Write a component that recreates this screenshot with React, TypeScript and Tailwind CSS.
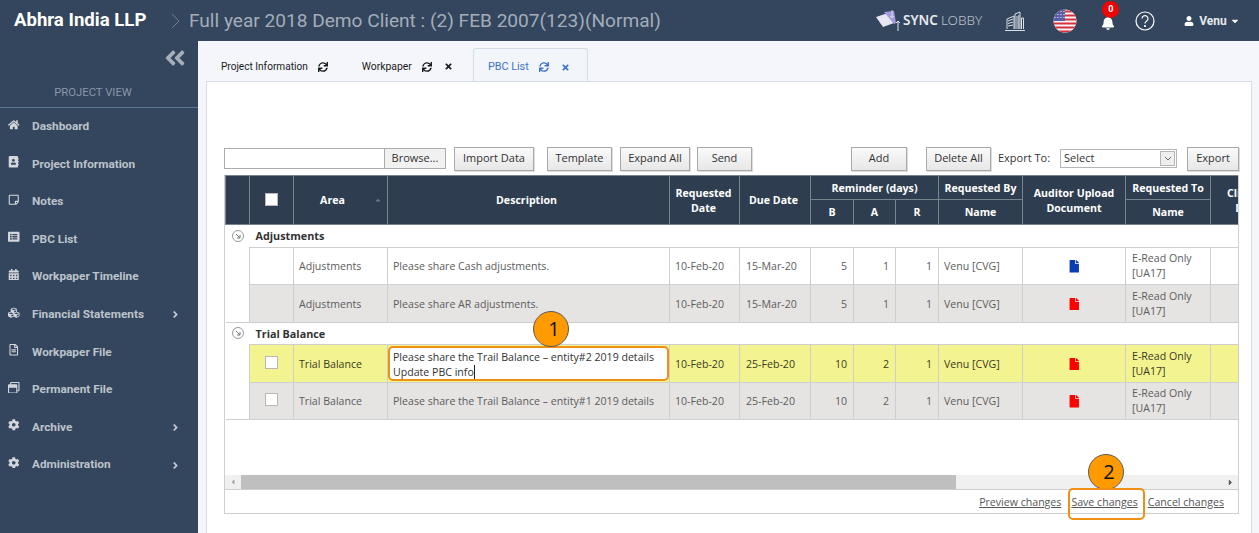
import React from "react";
import {
  FaHome, FaAddressBook, FaRegStickyNote, FaListAlt, FaCalendarAlt, FaCubes, FaRegFileAlt, FaRegWindowRestore,
  FaCog, FaAngleRight, FaAngleDoubleLeft, FaSync, FaTimes, FaFile, FaUser, FaBell, FaCaretDown, FaCaretLeft, FaCaretRight, FaCaretUp,
} from "react-icons/fa";

const nav: [any, string, boolean][] = [
  [FaHome, "Dashboard", false],
  [FaAddressBook, "Project Information", false],
  [FaRegStickyNote, "Notes", false],
  [FaListAlt, "PBC List", false],
  [FaCalendarAlt, "Workpaper Timeline", false],
  [FaCubes, "Financial Statements", true],
  [FaRegFileAlt, "Workpaper File", false],
  [FaRegWindowRestore, "Permanent File", false],
  [FaCog, "Archive", true],
  [FaCog, "Administration", true],
];

const BodyFont = "font-['Open_Sans',sans-serif]";

function Flag() {
  return (
    <svg width="24" height="24" viewBox="0 0 24 24">
      <defs>
        <clipPath id="flagc"><circle cx="12" cy="12" r="11.5" /></clipPath>
      </defs>
      <g clipPath="url(#flagc)">
        <rect width="24" height="24" fill="#f4f4f4" />
        {[0, 4, 8, 12, 16, 20].map((y) => (
          <rect key={y} y={y + 1.5} width="24" height="2" fill="#d8303f" />
        ))}
        <rect width="12" height="12" fill="#5b5ea6" />
        {[2, 5, 8].map((y) => [2, 5, 8, 11].map((x) => <circle key={`${x}-${y}`} cx={x} cy={y + 0.5} r="0.6" fill="#fff" />))}
      </g>
    </svg>
  );
}

function Buildings() {
  return (
    <svg width="22" height="20" viewBox="0 0 22 20" fill="none" stroke="#d9dee4" strokeWidth="1">
      <path d="M1 19.5h20" />
      <path d="M3 18V8l7-3v13" />
      <path d="M4 10l5-2M4 12.5l5-1.5M4 15l5-1" />
      <path d="M11 18V3l5-2v17" />
      <path d="M13 5v13M14.8 4v14" />
      <path d="M17.5 18V7h2v11" />
    </svg>
  );
}

function SyncLogo() {
  return (
    <div className="flex items-center">
      <svg width="26" height="22" viewBox="0 0 26 22">
        <path d="M0 7l12-4 6 10-11 4z" fill="#e8e6f5" />
        <path d="M8 2l10-1 2 12-2 1z" fill="#a49ae0" />
        <path d="M16 0v8M14 6l2 2 2-2" stroke="#d8dbe2" strokeWidth="1" fill="none" />
        <path d="M22 21V11M20 13l2-2 2 2" stroke="#e8e8ee" strokeWidth="1" fill="none" />
      </svg>
      <span className="ml-[1px] font-['Noto_Sans',sans-serif] text-[13.5px] font-semibold text-[#e6e9ee]">SYNC</span>
      <span className="ml-[3px] font-['Noto_Sans',sans-serif] text-[13.5px] font-light text-[#b9c1cb]">LOBBY</span>
    </div>
  );
}

function Header() {
  return (
    <header className="flex h-[41px] shrink-0 items-center bg-[#34465d] font-['Roboto',sans-serif]">
      <span className="ml-[14px] w-[133px] whitespace-nowrap text-[18.6px] font-bold leading-none text-white">Abhra India LLP</span>
      <svg className="ml-[23px]" width="12" height="18" viewBox="0 0 12 18" fill="none" stroke="#6e7d8e" strokeWidth="1"><path d="M2 2l7 7-7 7" /></svg>
      <span className="ml-[7px] w-[472px] whitespace-nowrap text-[19.1px] leading-none text-[#a3adb9]">Full year 2018 Demo Client : (2) FEB 2007(123)(Normal)</span>
      <div className="ml-[215px]"><SyncLogo /></div>
      <div className="ml-[22px] flex items-center"><Buildings /></div>
      <div className="ml-[27px] flex items-center"><Flag /></div>
      <div className="relative ml-[24px] flex h-[41px] w-[14px] items-center justify-center text-white">
        <FaBell className="mt-[5px] text-[14px]" />
        <span className="absolute left-[1px] top-[1px] flex h-[17px] w-[17px] items-center justify-center rounded-full bg-[#f00202] text-[9px] font-bold text-white">0</span>
      </div>
      <svg className="ml-[20px]" width="20" height="20" viewBox="0 0 20 20" fill="none" stroke="#fff" strokeWidth="1.2">
        <circle cx="10" cy="10" r="9" />
        <path d="M7 7.6a3 3 0 1 1 4.6 2.5c-1 .7-1.6 1.1-1.6 2.4" />
        <circle cx="10" cy="15" r=".5" fill="#fff" />
      </svg>
      <FaUser className="ml-[29px] text-[10px] text-white" />
      <span className="ml-[5px] text-[12px] font-bold text-[#e6e9ee]">Venu</span>
      <FaCaretDown className="ml-[3px] text-[10px] text-white" />
    </header>
  );
}

function Sidebar() {
  return (
    <aside className="flex w-[198px] shrink-0 flex-col bg-[#34465d] font-['Roboto',sans-serif]">
      <div className="flex h-[66px] flex-col">
        <div className="flex justify-end pr-[11px] pt-[5px]">
          <FaAngleDoubleLeft className="text-[24px] text-[#a5afba]" />
        </div>
        <div className="mt-[15px] pr-[12px] text-center text-[11.3px] leading-[16px] text-[#8997a8]">PROJECT VIEW</div>
      </div>
      <div className="h-[1px] bg-[#5c7893]" />
      {nav.map(([Icon, label, more]) => (
        <div key={label} className="flex h-[37.6px] shrink-0 items-center">
          <span className="mb-[5px] flex w-[32px] justify-center pr-[4px] text-[#d3d7dc]">
            <Icon className="text-[11.5px]" />
          </span>
          <span className="text-[11.8px] font-bold text-[#bcc3cb]">{label}</span>
          {more && <FaAngleRight className="ml-auto mr-[17px] text-[11px] text-[#c5cad0]" />}
        </div>
      ))}
    </aside>
  );
}

function Tabs() {
  const Tab = ({ label, close, active, ml, size }: { label: string; close?: boolean; active?: boolean; ml: string; size: string }) => (
    <div className={`flex h-[33px] items-center pt-[4px] ${ml} ${active ? "w-[115px] rounded-t-[3px] border border-b-0 border-[#d4dbe6] bg-[#f2f5f9] pl-[14px] text-[#3f72d0]" : "text-[#1c1c1c]"}`}>
      <span className={size}>{label}</span>
      <FaSync className="ml-[10px] text-[10px]" />
      {close && <FaTimes className="ml-[12px] text-[9px]" />}
    </div>
  );
  return (
    <div className="flex h-[40px] shrink-0 items-end pl-[14px] font-['Roboto',sans-serif]">
      <Tab label="Project Information" ml="ml-[1px]" size="text-[10.1px]" />
      <Tab label="Workpaper" close ml="ml-[34px]" size="text-[10.4px]" />
      <Tab label="PBC List" close active ml="ml-[20px]" size="text-[10.8px]" />
    </div>
  );
}

function Btn({ children, w, ml }: { children: React.ReactNode; w: string; ml: string }) {
  return (
    <div className={`flex h-[24px] items-center justify-center border border-[#a9a9a9] bg-gradient-to-b from-[#fafafa] to-[#e7e7e7] pb-[1px] text-[11px] text-[#333] shadow-[1px_1px_0_#ddd] ${w} ${ml}`}>
      {children}
    </div>
  );
}

function Toolbar() {
  return (
    <div className={`ml-[17px] mt-[64px] flex h-[25px] w-[1015px] shrink-0 items-center ${BodyFont}`}>
      <div className="flex h-[21px] w-[222px] border border-[#ababab] bg-white">
        <div className="w-[159px]" />
        <div className="flex flex-1 items-center justify-center border-l border-[#ababab] bg-[#f1f1f1] pb-[1px] text-[11px] text-[#333]">Browse...</div>
      </div>
      <Btn w="w-[80px]" ml="ml-[8px]">Import Data</Btn>
      <Btn w="w-[65px]" ml="ml-[13px]">Template</Btn>
      <Btn w="w-[70px]" ml="ml-[8px]">Expand All</Btn>
      <Btn w="w-[55px]" ml="ml-[7px]">Send</Btn>
      <Btn w="w-[56px]" ml="ml-[99px]">Add</Btn>
      <Btn w="w-[65px]" ml="ml-[19px]">Delete All</Btn>
      <span className="ml-[7px] pb-[1px] text-[11px] text-[#333]">Export To:</span>
      <div className="ml-[10px] flex h-[19px] w-[117px] items-center border border-[#b5b5b5] bg-white pl-[3px] text-[11px] text-[#333]">
        <span className="flex-1">Select</span>
        <span className="mr-[1px] flex h-[15px] w-[15px] items-center justify-center border border-[#b5b5b5] bg-[#eee]">
          <svg width="8" height="5" viewBox="0 0 8 5" fill="none" stroke="#666"><path d="M1 1l3 3 3-3" /></svg>
        </span>
      </div>
      <Btn w="w-[52px]" ml="ml-[10px]">Export</Btn>
    </div>
  );
}

type Row = { area: string; desc: string; due: string; b: number; a: number; file: string; check: boolean; tone: "white" | "gray" | "yellow"; edit?: boolean };

const rowsA: Row[] = [
  { area: "Adjustments", desc: "Please share Cash adjustments.", due: "15-Mar-20", b: 5, a: 1, file: "#0a3cb4", check: false, tone: "white" },
  { area: "Adjustments", desc: "Please share AR adjustments.", due: "15-Mar-20", b: 5, a: 1, file: "#ff0000", check: false, tone: "gray" },
];
const rowsB: Row[] = [
  { area: "Trial Balance", desc: "Please share the Trail Balance – entity#2 2019 details", due: "25-Feb-20", b: 10, a: 2, file: "#ff0000", check: true, tone: "yellow", edit: true },
  { area: "Trial Balance", desc: "Please share the Trail Balance – entity#1 2019 details", due: "25-Feb-20", b: 10, a: 2, file: "#ff0000", check: true, tone: "gray" },
];

const th = "border border-[#78858f] bg-[#2e3e50] p-0 text-center align-middle text-[10.6px] font-bold leading-[15px] text-white";

function DataRow({ r, last }: { r: Row; last: boolean }) {
  const bg = r.tone === "white" ? "bg-white" : r.tone === "gray" ? "bg-[#e6e4e3]" : "bg-[#f3f48f]";
  const color = r.tone === "yellow" ? "text-[#3a3a22]" : "text-[#5c5c5c]";
  const td = `border border-[#cfcfcf] ${bg} ${color} text-[10.6px] leading-[15px] p-0 align-middle overflow-hidden`;
  return (
    <tr className="h-[37.5px]">
      <td className={`border-0 bg-white p-0 ${last ? "border-b border-[#cfcfcf]" : ""}`} />
      <td className={`${td} text-center`}>
        {r.check && <span className="inline-block h-[13px] w-[13px] translate-y-[1px] border border-[#b8b8b8] bg-white" />}
      </td>
      <td className={`${td} pl-[5px] pt-[2px]`}>{r.area}</td>
      <td className={`${td} ${r.edit ? "" : "pl-[5px] pt-[2px]"}`}>
        {r.edit ? (
          <div className="h-[35px] rounded-[5px] border-[2.5px] border-[#ef8f13] bg-white pl-[3px] pt-[2px] text-[#333]">
            <div className="whitespace-nowrap">{r.desc}</div>
            <div className="whitespace-nowrap">Update PBC info<span className="border-l border-[#222]" /></div>
          </div>
        ) : (
          r.desc
        )}
      </td>
      <td className={`${td} pl-[5px] pt-[2px]`}>10-Feb-20</td>
      <td className={`${td} pl-[6px] pt-[2px]`}>{r.due}</td>
      <td className={`${td} pr-[6px] pt-[2px] text-right`}>{r.b}</td>
      <td className={`${td} pr-[6px] pt-[2px] text-right`}>{r.a}</td>
      <td className={`${td} pr-[6px] pt-[2px] text-right`}>1</td>
      <td className={`${td} pl-[5px] pt-[2px]`}>Venu [CVG]</td>
      <td className={`${td} text-center`}>
        <FaFile className="inline-block text-[12.5px]" style={{ color: r.file }} />
      </td>
      <td className={`${td} pl-[6px] pt-[1px]`}>E-Read Only<br />[UA17]</td>
      <td className={td} />
      <td className={td} />
    </tr>
  );
}

function GroupRow({ label }: { label: string }) {
  return (
    <tr className="h-[22.5px]">
      <td colSpan={14} className="border-0 bg-white p-0 text-[10.8px] font-bold leading-[15px] text-[#333]">
        <div className="flex items-center">
          <span className="ml-[6px] flex h-[12px] w-[12px] items-center justify-center rounded-full border border-[#9a9a9a]">
            <svg width="6" height="6" viewBox="0 0 6 6" fill="none" stroke="#777"><path d="M1 1l4 4M5 2v3H2" /></svg>
          </span>
          <span className="ml-[12px]">{label}</span>
        </div>
      </td>
    </tr>
  );
}

function Grid() {
  return (
    <div className={`ml-[17px] mt-[4px] flex h-[339px] w-[1015px] shrink-0 flex-col border-b border-l border-r border-[#cfcfcf] ${BodyFont}`}>
      <div className="h-[300px] shrink-0 overflow-hidden">
        <table className="w-[1045px] table-fixed border-collapse">
          <colgroup>
            <col className="w-[24px]" /><col className="w-[44px]" /><col className="w-[94px]" /><col className="w-[282px]" />
            <col className="w-[70px]" /><col className="w-[71px]" /><col className="w-[43px]" /><col className="w-[42px]" />
            <col className="w-[43px]" /><col className="w-[84px]" /><col className="w-[103px]" /><col className="w-[85px]" />
            <col className="w-[29px]" /><col className="w-[31px]" />
          </colgroup>
          <thead>
            <tr className="h-[24px]">
              <th rowSpan={2} className={th} />
              <th rowSpan={2} className={th}><span className="inline-block h-[13px] w-[13px] translate-y-[1px] border border-[#b8b8b8] bg-white" /></th>
              <th rowSpan={2} className={th}>
                <div className="relative pr-[16px]">Area<FaCaretUp className="absolute right-[5px] top-[3px] text-[8px] text-[#6e7c8a]" /></div>
              </th>
              <th rowSpan={2} className={`${th} pr-[4px]`}>Description</th>
              <th rowSpan={2} className={`${th} pr-[2px] pt-[1px]`}>Requested<br />Date</th>
              <th rowSpan={2} className={`${th} pr-[3px]`}>Due Date</th>
              <th colSpan={3} className={`${th} pt-[1px]`}>Reminder (days)</th>
              <th className={`${th} pt-[1px]`}>Requested By</th>
              <th rowSpan={2} className={`${th} pt-[1px]`}>Auditor Upload<br />Document</th>
              <th className={`${th} pt-[1px]`}>Requested To</th>
              <th rowSpan={2} colSpan={2} className={`${th} overflow-hidden whitespace-nowrap pl-[16px] pt-[1px] text-left`}>Client<br />&nbsp;&nbsp;&nbsp;Date</th>
            </tr>
            <tr className="h-[25px]">
              <th className={th}>B</th>
              <th className={th}>A</th>
              <th className={th}>R</th>
              <th className={th}>Name</th>
              <th className={th}>Name</th>
            </tr>
          </thead>
          <tbody>
            <GroupRow label="Adjustments" />
            {rowsA.map((r, i) => <DataRow key={r.desc} r={r} last={i === 1} />)}
            <GroupRow label="Trial Balance" />
            {rowsB.map((r, i) => <DataRow key={r.desc} r={r} last={i === 1} />)}
          </tbody>
        </table>
      </div>
      <div className="flex h-[14px] shrink-0 items-center bg-[#f0f0f0]">
        <span className="flex w-[16px] justify-center"><FaCaretLeft className="text-[8px] text-[#a3a3a3]" /></span>
        <div className="h-[14px] w-[715px] bg-[#bfbfbf]" />
        <span className="ml-auto flex w-[16px] justify-center"><FaCaretRight className="text-[9px] text-[#555]" /></span>
      </div>
      <div className="flex flex-1 items-center justify-end gap-[10px] border-t border-[#cfcfcf] pr-[14px] pt-[2px] text-[10.6px] text-[#555] underline">
        <span>Preview changes</span>
        <span>Save changes</span>
        <span>Cancel changes</span>
      </div>
    </div>
  );
}

function Marker({ n, className }: { n: number; className: string }) {
  return (
    <div className={`absolute flex h-[36px] w-[36px] items-center justify-center rounded-full border border-[#5a5a5a] bg-[#ff9a00] pl-[6px] font-['Open_Sans',sans-serif] text-[20px] text-[#111] ${className}`}>
      {n}
    </div>
  );
}

export default function App() {
  return (
    <div className="relative flex h-[533px] w-[1259px] flex-col overflow-hidden bg-[#f4f6fb]">
      <Header />
      <div className="flex min-h-0 flex-1">
        <Sidebar />
        <main className="flex min-w-0 flex-1 flex-col pl-[8px]">
          <Tabs />
          <div className="flex w-[1046px] flex-1 flex-col border-l border-r border-t border-[#d7dce5] bg-white">
            <Toolbar />
            <Grid />
          </div>
        </main>
      </div>
      <Marker n={1} className="left-[533px] top-[311px]" />
      <Marker n={2} className="left-[1088px] top-[454px]" />
      <div className="absolute left-[1068px] top-[488px] h-[32px] w-[77px] rounded-[5px] border-[2.5px] border-[#ef8f13]" />
    </div>
  );
}
